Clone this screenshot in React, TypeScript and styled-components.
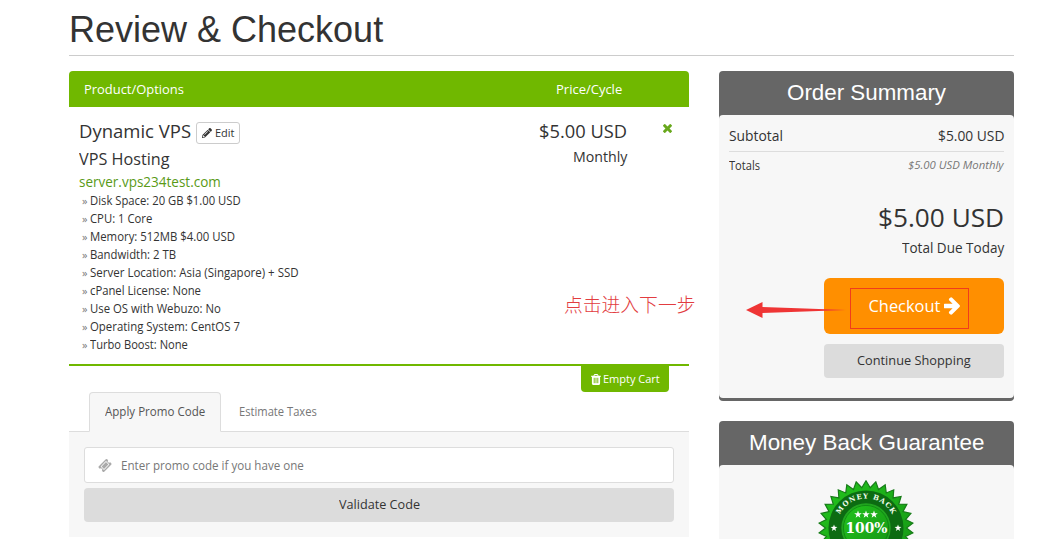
import React, { useLayoutEffect, useRef, useState } from "react";
import styled, { createGlobalStyle, css } from "styled-components";
import { FaPencilAlt } from "react-icons/fa";

const GlobalStyle = createGlobalStyle`
  * { box-sizing: border-box; }
  html, body { margin: 0; background: #fff; overflow: hidden; }
  body { font-family: "Open Sans", "Noto Sans", sans-serif; color: #333; }
`;

const green = "#70b800";

/* Text that is condensed or widened to a given measure. */
const Measure = styled.span<{ $w: number; $size: number; $lh: number; $color?: string; $weight?: number; $italic?: boolean; $heading?: boolean }>`
  display: inline-block;
  flex: none;
  vertical-align: top;
  text-align: left;
  white-space: nowrap;
  width: ${(p) => p.$w}px;
  height: ${(p) => p.$lh}px;
  font-size: ${(p) => p.$size}px;
  line-height: ${(p) => p.$lh}px;
  color: ${(p) => p.$color ?? "inherit"};
  font-weight: ${(p) => p.$weight ?? 400};
  font-style: ${(p) => (p.$italic ? "italic" : "normal")};
  ${(p) => p.$heading && css`font-family: "Liberation Sans", Arial, sans-serif;`}
`;

const Stretch = styled.span`
  display: inline-block;
  transform-origin: 0 50%;
`;

type FitProps = { w: number; size: number; lh: number; color?: string; weight?: number; italic?: boolean; heading?: boolean; children: string };

function Fit({ w, size, lh, color, weight, italic, heading, children }: FitProps) {
  const ref = useRef<HTMLSpanElement>(null);
  const [scale, setScale] = useState(1);
  useLayoutEffect(() => {
    if (ref.current) setScale(w / ref.current.offsetWidth);
  }, [w, children]);
  return (
    <Measure $w={w} $size={size} $lh={lh} $color={color} $weight={weight} $italic={italic} $heading={heading}>
      <Stretch ref={ref} style={{ transform: `scaleX(${scale})` }}>{children}</Stretch>
    </Measure>
  );
}

const glyphs = {
  arrow: { box: "192 160 1408 1600", d: "M1600 960q0 54-37 91l-651 651q-39 37-91 37-51 0-90-37l-75-75q-38-38-38-91t38-91l293-293h-704q-52 0-84.5-37.5t-32.5-90.5v-128q0-53 32.5-90.5t84.5-37.5h704l-293-294q-38-36-38-90t38-90l75-75q38-38 90-38 53 0 91 38l651 651q37 35 37 90z" },
  times: { box: "302 366 1188 1188", d: "M1490 1322q0 40-28 68l-136 136q-28 28-68 28t-68-28l-294-294-294 294q-28 28-68 28t-68-28l-136-136q-28-28-28-68t28-68l294-294-294-294q-28-28-28-68t28-68l136-136q28-28 68-28t68 28l294 294 294-294q28-28 68-28t68 28l136 136q28 28 28 68t-28 68l-294 294 294 294q28 28 28 68z" },
  ticket: { box: "53 53 1686 1686", d: "M1024 452l316 316-572 572-316-316zm-211 979l618-618q19-19 19-45t-19-45l-362-362q-18-18-45-18t-45 18l-618 618q-19 19-19 45t19 45l362 362q18 18 45 18t45-18zm889-637l-907 908q-37 37-90.5 37t-90.5-37l-126-125q56-56 56-136t-56-136-136-56-136 56l-125-126q-37-37-37-90.5t37-90.5l907-906q37-37 90.5-37t90.5 37l125 125q-56 56-56 136t56 136 136 56 136-56l126 125q37 37 37 90.5t-37 90.5z" },
  trash: { box: "192 128 1408 1536", d: "M704 1376v-704q0-14-9-23t-23-9h-64q-14 0-23 9t-9 23v704q0 14 9 23t23 9h64q14 0 23-9t9-23zm256 0v-704q0-14-9-23t-23-9h-64q-14 0-23 9t-9 23v704q0 14 9 23t23 9h64q14 0 23-9t9-23zm256 0v-704q0-14-9-23t-23-9h-64q-14 0-23 9t-9 23v704q0 14 9 23t23 9h64q14 0 23-9t9-23zm-544-992h448l-48-117q-7-9-17-11h-317q-10 2-17 11zm928 32v64q0 14-9 23t-23 9h-96v948q0 83-47 143.5t-113 60.5h-832q-66 0-113-58.5t-47-141.5v-952h-96q-14 0-23-9t-9-23v-64q0-14 9-23t23-9h309l70-167q15-37 54-63t79-26h320q40 0 79 26t54 63l70 167h309q14 0 23 9t9 23z" },
};

function Glyph({ name, w, h }: { name: keyof typeof glyphs; w: number; h: number }) {
  return (
    <svg width={w} height={h} viewBox={glyphs[name].box} fill="currentColor">
      <path d={glyphs[name].d} />
    </svg>
  );
}

const Page = styled.div`
  position: relative;
  width: 1062px;
  height: 539px;
  padding: 0 48px 0 69px;
  overflow: hidden;
`;

const PageHeader = styled.header`
  height: 56px;
  padding-top: 9px;
  border-bottom: 1px solid #ccc;
`;

const Columns = styled.div`
  display: flex;
  gap: 30px;
  padding-top: 15px;
`;

const Main = styled.main`
  width: 620px;
`;

const Side = styled.aside`
  width: 295px;
  display: flex;
  flex-direction: column;
  gap: 20px;
`;

const TableHead = styled.div`
  display: flex;
  justify-content: space-between;
  height: 36px;
  padding: 0 67px 0 15px;
  color: #fff;
  background: ${green};
  border-radius: 4px 4px 0 0;
`;

const CartItem = styled.section`
  display: flex;
  justify-content: space-between;
  height: 259px;
  padding: 12px 17px 0 10px;
  border-bottom: 2px solid ${green};
`;

const Product = styled.div`
  display: flex;
  flex-direction: column;
`;

const ProductName = styled.div`
  display: flex;
  gap: 5px;
  height: 26px;
`;

const EditButton = styled.button`
  display: flex;
  align-items: center;
  gap: 3px;
  width: 44px;
  height: 22px;
  margin-top: 3px;
  padding: 0 0 0 5px;
  font: inherit;
  color: #333;
  background: #fff;
  border: 1px solid #ccc;
  border-radius: 3px;
`;

const Options = styled.ul`
  list-style: none;
  margin: 0;
  padding: 1px 0 0 3px;
`;

const Option = styled.li`
  display: flex;
  gap: 3px;
  height: 18px;
`;

const PriceArea = styled.div`
  display: flex;
  gap: 36px;
`;

const Price = styled.div`
  display: flex;
  flex-direction: column;
  align-items: flex-end;
`;

const Remove = styled.span`
  padding-top: 5px;
  line-height: 0;
  color: #68a81c;
`;

const CartFooter = styled.div`
  display: flex;
  justify-content: flex-end;
  height: 26px;
  padding-right: 20px;
`;

const EmptyCart = styled.button`
  display: flex;
  align-items: center;
  gap: 2px;
  width: 88px;
  height: 26px;
  padding: 0 0 0 10px;
  border: 0;
  font: inherit;
  color: #fff;
  background: ${green};
  border-radius: 0 0 4px 4px;
`;

const Tabs = styled.nav`
  display: flex;
  height: 40px;
  padding-left: 20px;
  border-bottom: 1px solid #ddd;
`;

const Tab = styled.div<{ $active?: boolean }>`
  height: 40px;
  padding: 0 15px;
  border: 1px solid transparent;
  ${(p) => p.$active ? css`
    color: #555;
    background: #f7f7f7;
    border-color: #ddd;
    border-bottom-color: #f7f7f7;
    border-radius: 4px 4px 0 0;
  ` : css`
    color: #777;
    margin-left: 2px;
  `}
`;

const TabPanel = styled.div`
  display: flex;
  flex-direction: column;
  gap: 5px;
  height: 105px;
  padding: 15px;
  background: #f7f7f7;
`;

const PromoField = styled.div`
  display: flex;
  align-items: center;
  gap: 9px;
  height: 36px;
  padding-left: 13px;
  color: #aaa;
  background: #fff;
  border: 1px solid #ddd;
  border-radius: 3px;
`;

const GreyButton = styled.button`
  display: flex;
  justify-content: center;
  width: 100%;
  height: 34px;
  padding: 0;
  border: 0;
  font: inherit;
  color: #333;
  background: #dcdcdc;
  border-radius: 4px;
`;

const Card = styled.section<{ $h: number }>`
  height: ${(p) => p.$h}px;
  background: #666;
  border-bottom: 3px solid #666;
  border-radius: 4px;
`;

const CardTitle = styled.h2`
  display: flex;
  justify-content: center;
  margin: 0;
  height: 44px;
`;

const CardBody = styled.div`
  display: flex;
  flex-direction: column;
  height: calc(100% - 44px);
  padding: 10px 10px 0;
  background: #f7f7f7;
  border-radius: 4px;
`;

const SummaryRow = styled.div<{ $line?: boolean }>`
  display: flex;
  justify-content: space-between;
  height: ${(p) => (p.$line ? 27 : 50)}px;
  border-bottom: ${(p) => (p.$line ? "1px solid #ddd" : "0")};
`;

const Due = styled.div`
  display: flex;
  flex-direction: column;
  align-items: flex-end;
  height: 76px;
`;

const Actions = styled.div`
  display: flex;
  flex-direction: column;
  gap: 10px;
  width: 180px;
  align-self: flex-end;
`;

const CheckoutButton = styled.button`
  display: flex;
  align-items: center;
  justify-content: center;
  gap: 3px;
  height: 56px;
  padding: 0;
  border: 0;
  font: inherit;
  color: #fff;
  background: #ff8f00;
  border-radius: 6px;
`;

const SealHolder = styled.div`
  display: flex;
  justify-content: center;
  padding: 5px 2px 0 0;
`;

const Highlight = styled.div`
  position: absolute;
  left: 850px;
  top: 288px;
  width: 119px;
  height: 41px;
  border: 1px solid #f03c1c;
`;

const Note = styled.div`
  position: absolute;
  left: 564px;
  top: 291px;
  font: 300 18.8px/26px "Noto Sans CJK SC", sans-serif;
  color: #e23c40;
  white-space: nowrap;
`;

const Pointer = styled.svg`
  position: absolute;
  left: 745px;
  top: 300px;
`;

const options: [string, number][] = [
  ["Disk Space: 20 GB $1.00 USD", 151],
  ["CPU: 1 Core", 62],
  ["Memory: 512MB $4.00 USD", 145],
  ["Bandwidth: 2 TB", 86],
  ["Server Location: Asia (Singapore) + SSD", 209],
  ["cPanel License: None", 111],
  ["Use OS with Webuzo: No", 131],
  ["Operating System: CentOS 7", 150],
  ["Turbo Boost: None", 98],
];

const polar = (r: number, deg: number) => {
  const a = (deg * Math.PI) / 180;
  return `${(48 + r * Math.sin(a)).toFixed(2)},${(48 - r * Math.cos(a)).toFixed(2)}`;
};
const TEETH = 30;
const burst = Array.from({ length: TEETH * 2 }, (_, i) => polar(i % 2 ? 40.5 : 47.2, (i * 180) / TEETH)).join(" ");
const star = (cx: number, cy: number, r: number) =>
  Array.from({ length: 10 }, (_, i) => {
    const a = (i * Math.PI) / 5;
    const q = i % 2 ? r * 0.4 : r;
    return `${cx + q * Math.sin(a)},${cy - q * Math.cos(a)}`;
  }).join(" ");

function Seal() {
  return (
    <svg width="96" height="96" viewBox="0 0 96 96">
      <defs>
        <path id="sealArc" d="M18.5 48a29.5 29.5 0 0 1 59 0" />
        <linearGradient id="sealFill" x1="0" y1="0" x2="1" y2="1">
          <stop offset="0" stopColor="#23c51d" />
          <stop offset="1" stopColor="#159314" />
        </linearGradient>
      </defs>
      <polygon points={burst} fill="url(#sealFill)" stroke="#177c18" strokeWidth="1.2" />
      <circle cx="48" cy="48" r="37.5" fill="#0c6b12" />
      <circle cx="48" cy="48" r="24" fill="url(#sealFill)" stroke="#22a421" strokeWidth="1.4" />
      <circle cx="48" cy="48" r="22.6" fill="none" stroke="#0f7d14" strokeWidth="0.8" />
      <text fill="#f4fff0" fontFamily="DejaVu Serif" fontWeight="700" fontSize="7" letterSpacing="0.95">
        <textPath href="#sealArc" startOffset="50.5%" textAnchor="middle">MONEY BACK</textPath>
      </text>
      {[40, 48, 56].map((x) => <polygon key={x} points={star(x, 34.5, 4)} fill="#fff" />)}
      <polygon points={star(16, 48, 3.6)} fill="#fff" />
      <polygon points={star(80, 48, 3.6)} fill="#fff" />
      <text x="27.5" y="52.5" textLength="42" lengthAdjust="spacingAndGlyphs" fill="#fff" fontFamily="DejaVu Serif" fontWeight="700" fontSize="14.5">100%</text>
    </svg>
  );
}

export default function App() {
  return (
    <>
      <GlobalStyle />
      <Page>
        <PageHeader>
          <Fit w={314} size={36} lh={41} heading>Review &amp; Checkout</Fit>
        </PageHeader>
        <Columns>
          <Main>
            <TableHead>
              <Fit w={100} size={12.8} lh={36} weight={500}>Product/Options</Fit>
              <Fit w={66} size={12.8} lh={36} weight={500}>Price/Cycle</Fit>
            </TableHead>
            <CartItem>
              <Product>
                <ProductName>
                  <Fit w={112} size={18.5} lh={24}>Dynamic VPS</Fit>
                  <EditButton>
                    <FaPencilAlt size={10} />
                    <Fit w={20} size={11} lh={20}>Edit</Fit>
                  </EditButton>
                </ProductName>
                <Fit w={91} size={15.5} lh={28}>VPS Hosting</Fit>
                <Fit w={142} size={13.6} lh={18} color="#5a9a17">server.vps234test.com</Fit>
                <Options>
                  {options.map(([text, w]) => (
                    <Option key={text}>
                      <Fit w={5} size={11} lh={18} color="#777">»</Fit>
                      <Fit w={w} size={12.4} lh={18}>{text}</Fit>
                    </Option>
                  ))}
                </Options>
              </Product>
              <PriceArea>
                <Price>
                  <Fit w={88} size={18.5} lh={24}>$5.00 USD</Fit>
                  <Fit w={54} size={14.2} lh={27}>Monthly</Fit>
                </Price>
                <Remove><Glyph name="times" w={9} h={9} /></Remove>
              </PriceArea>
            </CartItem>
            <CartFooter>
              <EmptyCart>
                <Glyph name="trash" w={10} h={11} />
                <Fit w={57} size={11} lh={24} weight={500}>Empty Cart</Fit>
              </EmptyCart>
            </CartFooter>
            <Tabs>
              <Tab $active><Fit w={100} size={12.6} lh={37}>Apply Promo Code</Fit></Tab>
              <Tab><Fit w={78} size={12.6} lh={37}>Estimate Taxes</Fit></Tab>
            </Tabs>
            <TabPanel>
              <PromoField>
                <Glyph name="ticket" w={14} h={13} />
                <Fit w={183} size={12.8} lh={34} color="#777">Enter promo code if you have one</Fit>
              </PromoField>
              <GreyButton><Fit w={81} size={12.8} lh={33}>Validate Code</Fit></GreyButton>
            </TabPanel>
          </Main>
          <Side>
            <Card $h={330}>
              <CardTitle><Fit w={159} size={22.5} lh={43} color="#fff" heading>Order Summary</Fit></CardTitle>
              <CardBody>
                <SummaryRow $line>
                  <Fit w={54} size={13.6} lh={21}>Subtotal</Fit>
                  <Fit w={66} size={13.6} lh={21}>$5.00 USD</Fit>
                </SummaryRow>
                <SummaryRow>
                  <Fit w={31} size={12.2} lh={27}>Totals</Fit>
                  <Fit w={96} size={11} lh={26} color="#777" italic>$5.00 USD Monthly</Fit>
                </SummaryRow>
                <Due>
                  <Fit w={126} size={26} lh={30}>$5.00 USD</Fit>
                  <Fit w={102} size={14.2} lh={32}>Total Due Today</Fit>
                </Due>
                <Actions>
                  <CheckoutButton>
                    <Fit w={72} size={16.4} lh={56} weight={500}>Checkout</Fit>
                    <Glyph name="arrow" w={16} h={18} />
                  </CheckoutButton>
                  <GreyButton><Fit w={114} size={13} lh={33}>Continue Shopping</Fit></GreyButton>
                </Actions>
              </CardBody>
            </Card>
            <Card $h={200}>
              <CardTitle><Fit w={235} size={22.5} lh={43} color="#fff" heading>Money Back Guarantee</Fit></CardTitle>
              <CardBody>
                <SealHolder><Seal /></SealHolder>
              </CardBody>
            </Card>
          </Side>
        </Columns>
        <Note>点击进入下一步</Note>
        <Highlight />
        <Pointer width="104" height="20" viewBox="0 0 104 20">
          <polygon points="1,10 17.5,2 17.5,7 60,8.6 101,10 60,11.4 17.5,13 17.5,18" fill="#ef3535" />
        </Pointer>
      </Page>
    </>
  );
}
